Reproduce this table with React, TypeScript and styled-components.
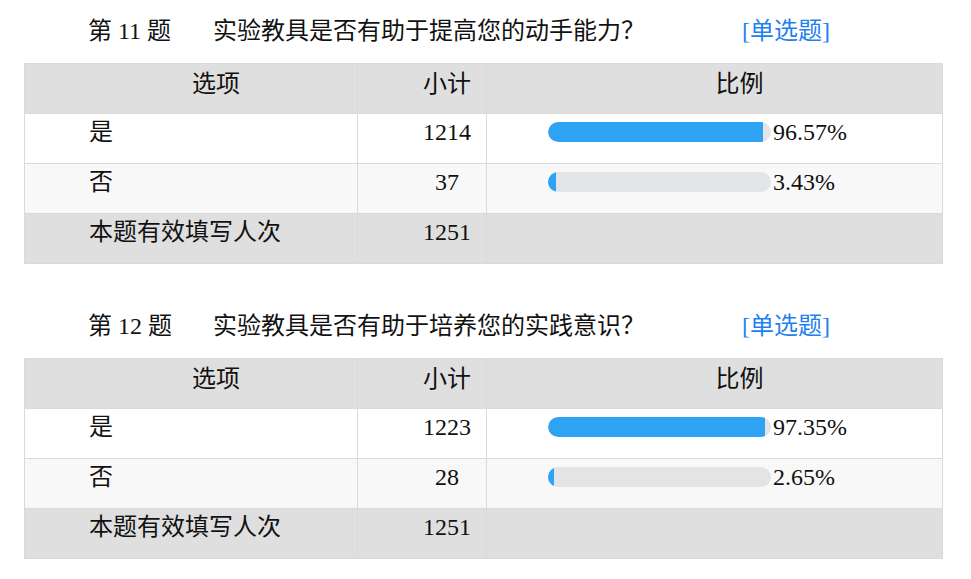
import React from 'react';
import styled, { createGlobalStyle } from 'styled-components';

const GlobalStyle = createGlobalStyle`
  body {
    margin: 0;
    background: #fff;
    color: #111;
    font-family: "Liberation Serif", "Noto Sans CJK SC", serif;
  }
`;

type Option = { label: string; count: number; percent: number };
type Question = { no: number; text: string; options: Option[]; total: number };

const questions: Question[] = [
  {
    no: 11,
    text: '实验教具是否有助于提高您的动手能力？',
    options: [
      { label: '是', count: 1214, percent: 96.57 },
      { label: '否', count: 37, percent: 3.43 },
    ],
    total: 1251,
  },
  {
    no: 12,
    text: '实验教具是否有助于培养您的实践意识？',
    options: [
      { label: '是', count: 1223, percent: 97.35 },
      { label: '否', count: 28, percent: 2.65 },
    ],
    total: 1251,
  },
];

const Page = styled.div`
  padding: 16px 0 20px 24px;
  width: 918px;
  display: flex;
  flex-direction: column;
  gap: 47px;
`;

const Section = styled.section`
  display: flex;
  flex-direction: column;
  gap: 17px;
`;

const TitleRow = styled.div`
  display: flex;
  padding-left: 64px;
  font-size: 24px;
  line-height: 30px;
  white-space: nowrap;
`;

const TitleNo = styled.span`
  width: 125px;
`;

const TitleText = styled.span`
  width: 529px;
`;

const TitleType = styled.span`
  color: #1f80f0;
`;

const Table = styled.table`
  width: 918px;
  border-collapse: collapse;
  table-layout: fixed;
  font-size: 24px;
  line-height: 30px;
`;

const Row = styled.tr<{ $bg: string }>`
  background: ${(p) => p.$bg};
  height: 50px;
`;

const Head = styled.th<{ $w: number }>`
  width: ${(p) => p.$w}px;
  font-weight: normal;
  text-align: center;
  vertical-align: top;
  padding: 5px 0 0 50px;
  border: 1px solid #dadada;
  box-sizing: border-box;
`;

const Cell = styled.td<{ $center?: boolean }>`
  text-align: ${(p) => (p.$center ? 'center' : 'left')};
  vertical-align: top;
  padding: 3px 0 0 ${(p) => (p.$center ? 50 : 64)}px;
  border: 1px solid #dadada;
  white-space: nowrap;
`;

const BarCell = styled.td`
  vertical-align: top;
  padding: 3px 0 0 61px;
  border: 1px solid #dadada;
  white-space: nowrap;
`;

const BarWrap = styled.div`
  display: flex;
  align-items: center;
  height: 30px;
`;

const Track = styled.div`
  width: 223px;
  height: 20px;
  border-radius: 10px;
  background: #e3e4e6;
  overflow: hidden;
`;

const Fill = styled.div`
  height: 100%;
  background: #2ea2f3;
  border-radius: 10px 0 0 10px;
`;

const Percent = styled.span`
  margin-left: 2px;
`;

const QuestionBlock = ({ q }: { q: Question }) => (
  <Section>
    <TitleRow>
      <TitleNo>第 {q.no} 题</TitleNo>
      <TitleText>{q.text}</TitleText>
      <TitleType>[单选题]</TitleType>
    </TitleRow>
    <Table>
      <thead>
        <Row $bg="#dfdfdf">
          <Head $w={333}>选项</Head>
          <Head $w={129}>小计</Head>
          <Head $w={456}>比例</Head>
        </Row>
      </thead>
      <tbody>
        {q.options.map((o, i) => (
          <Row key={o.label} $bg={i % 2 ? '#f8f8f8' : '#fff'}>
            <Cell>{o.label}</Cell>
            <Cell $center>{o.count}</Cell>
            <BarCell>
              <BarWrap>
                <Track>
                  <Fill style={{ width: `${o.percent}%` }} />
                </Track>
                <Percent>{o.percent.toFixed(2)}%</Percent>
              </BarWrap>
            </BarCell>
          </Row>
        ))}
        <Row $bg="#dfdfdf">
          <Cell>本题有效填写人次</Cell>
          <Cell $center>{q.total}</Cell>
          <BarCell />
        </Row>
      </tbody>
    </Table>
  </Section>
);

export default function App() {
  return (
    <>
      <GlobalStyle />
      <Page>
        {questions.map((q) => (
          <QuestionBlock key={q.no} q={q} />
        ))}
      </Page>
    </>
  );
}
